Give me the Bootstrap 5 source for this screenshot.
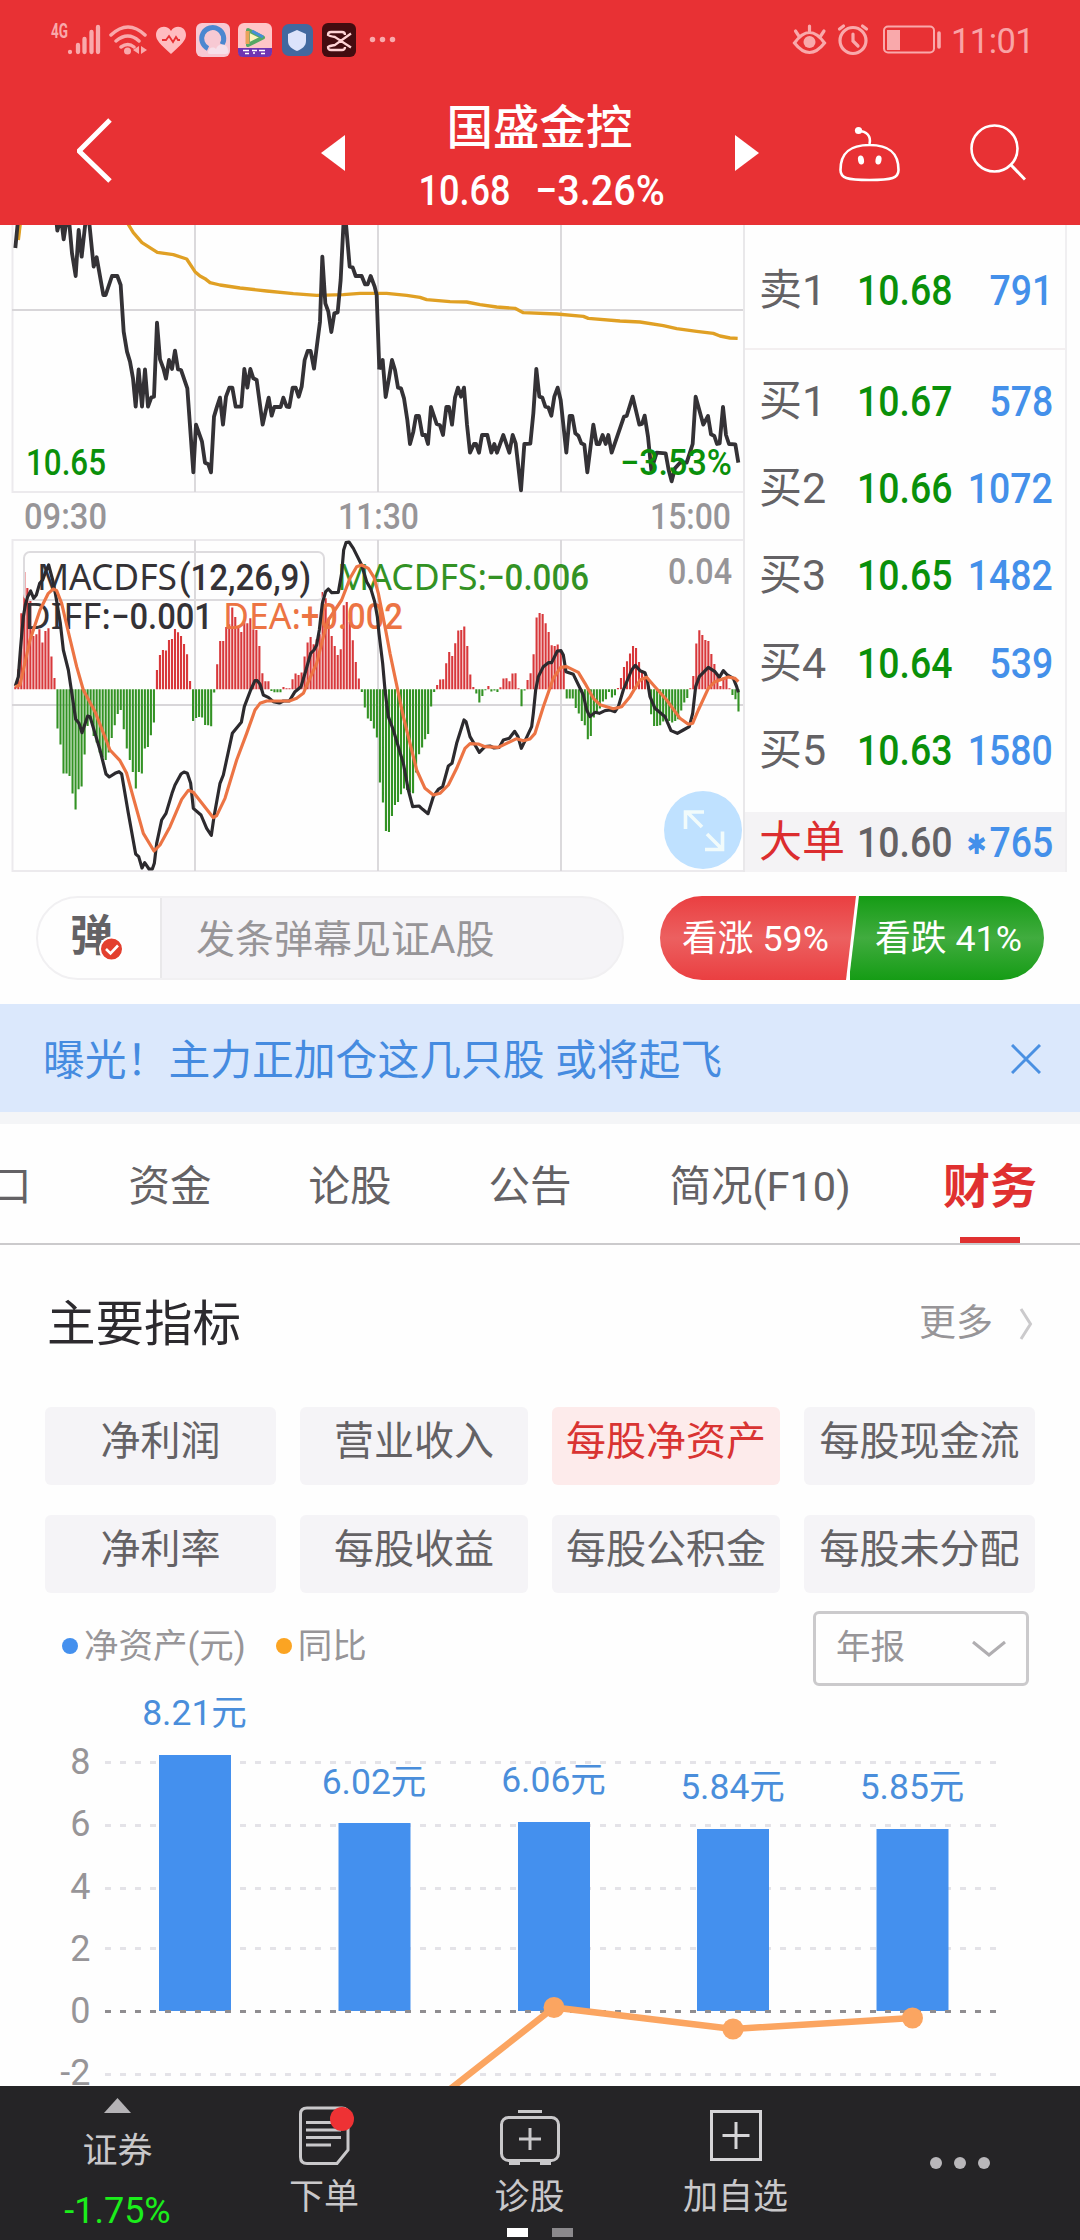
<!DOCTYPE html>
<html lang="zh-CN">
<head>
<meta charset="utf-8">
<meta name="viewport" content="width=device-width, initial-scale=1">
<title>国盛金控</title>
<link href="https://cdn.jsdelivr.net/npm/bootstrap@5.3.0/dist/css/bootstrap.min.css" rel="stylesheet">
<style>
  body{width:1080px;height:2240px;overflow:hidden;background:#fefefe;color:#646265;font-family:Roboto,"Noto Sans CJK SC",sans-serif;line-height:1}
  svg{display:block;flex:none}
  .app{width:1080px;height:2240px}
  .top{background:#e83134;height:225px;color:#fff}
  .statusbar{height:80px;padding-left:50px;padding-right:46px}
  .clock{font-size:34.5px;color:#f9a3a5;letter-spacing:-.6px;margin:2px 0 0 9px}
  .titlebar{height:145px;padding:0 54px 0 77px}
  .stock{width:390px;padding-top:23px}
  .stock h1{font-size:46.500px;line-height:50px;font-weight:500;margin:0}
  .quote{line-height:42px;margin-top:17px;font-size:42px}
  .din{display:inline-block;transform:scaleX(.87);font-weight:500}
  .quote .last{transform:translateX(-1px) scaleX(.86)}
  .quote .chg{transform:translateX(2px) scaleX(.94);margin-left:10px}
  .market{height:647px}
  .book{width:324px;border-left:2px solid #e9e8ea;border-right:2px solid #f0eff1;font-size:43px}
  .book .line{height:87.2px;padding-left:14px;padding-right:12px}
  .book .line .lab{width:98px;flex:none;white-space:nowrap;line-height:1}
  .book .line .px{color:#0a900a;width:92px;flex:none}
  .book .line .vol{color:#4490ea;flex:1;min-width:0;display:flex;justify-content:flex-end;white-space:nowrap}
  .px .din{transform-origin:left}
  .vol .din{transform-origin:right}
  .star{font-size:29px;font-weight:900;margin-right:3px;vertical-align:4px;-webkit-text-stroke:1px #4490ea}
  .sell{height:125px!important;border-bottom:2px solid #f3eff0;padding-top:8px}
  .buys{padding-top:8px;height:462px}
  .big{background:#f4f3f5;height:60px!important}
  .big .lab{color:#dc2d2f}.big .px{color:#646265!important}
  .danmu{height:132px;padding:24px 36px}
  .bullet{width:588px;height:84px;border:2px solid #f1f0f2;border-radius:42px;background:#f5f4f7;overflow:hidden;font-size:39px;color:#979598}
  .bullet .tag{width:124px;height:100%;background:#fefefe;border-right:2px solid #e9e8ea}
  .bullet .msg{padding:4px 0 0 34px}
  .votes{width:384px;height:84px;border-radius:42px;overflow:hidden;font-size:35.800px;color:#fff;background:#fff}
  .up{width:200px;padding:3px 0 0 22px;margin-right:-10px;background:linear-gradient(#ea3f41,#ec6060 50%,#ea3f41);clip-path:polygon(0 0,196px 0,186px 100%,0 100%)}
  .down{padding:3px 0 0 25px;flex:1;background:linear-gradient(#159c15,#41ac3f 50%,#159c15);clip-path:polygon(9px 0,100% 0,100% 100%,-1px 100%)}
  .notice{height:108px;background:#dbe8fc;color:#458be0;font-size:41.800px;padding:2px 39px 0 43px}
  .notice span{padding-top:3px}
  .strip{height:12px;background:#f4f5f7}
  .tabs{height:121px;border-bottom:2px solid #cbcacc;font-size:41.500px}
  .tabs .tb{position:relative;height:100%;flex:none;display:flex;align-items:center;justify-content:center;white-space:nowrap;padding-top:6px}
  .tabs .on{color:#e03030;font-weight:700;font-size:47px}
  .tabs .on::after{content:"";position:absolute;width:60px;height:6px;bottom:0;left:50%;margin-left:-30px;background:#e03030}
  .head{height:162px;padding:0 46px 5px 47px;font-size:48.500px;color:#2c2a2e}
  .head .ttl{padding-top:3px}
  .more{font-size:37px;color:#979598}
  .chips{display:grid;grid-template-columns:231px 228px 228px 231px;column-gap:24px;row-gap:30px;padding-left:45px;font-size:40px}
  .chip{height:78px;border-radius:6px;background:#f5f4f7;padding-bottom:9px;white-space:nowrap;overflow:hidden}
  .chip.on{background:#fdebeb;color:#d93433}
  .legendrow{height:76px;margin-top:17px;margin-bottom:1px;padding:0 51px 0 62px;color:#979598;font-size:34.500px}
  .dot{width:16px;height:16px;border-radius:50%;display:inline-block}
  .key{margin-left:6px}
  .period{width:216px;height:75px;border:3px solid #cbcacc;border-radius:6px;padding:0 19px 2px 20px}
  .foot{height:154px;background:#252426;color:#c9c8ca;font-size:35px}
  .foot .it{height:100%}
  .pager{position:absolute;left:507px;top:2228px;gap:24px}
  .pager i{width:21px;height:9px;background:#fff}
  .pager i+i{background:#8b898c}
</style>
</head>
<body>
<div class="app d-flex flex-column">
  <header class="top">
    <div class="statusbar d-flex align-items-center justify-content-between">
      <svg width="350" height="40" viewBox="50 21 350 40" fill="none" stroke="#f9a9ab">
        <text x="51" y="39" font-size="20" font-weight="700" fill="#f9a9ab" stroke="none" textLength="17" lengthAdjust="spacingAndGlyphs">4G</text>
        <path d="M70 53v0M78 53v-7M84.500 53v-13M91.500 53v-20M98 53v-25" stroke-width="4.300" stroke-linecap="round"/>
        <path d="M111 36q17-16 34 0M116 42q12-10 23 0M121 48q7-5 13 0" stroke-width="3.500" stroke-linecap="round"/>
        <circle cx="127.500" cy="52" r="3.500" fill="#f9a9ab" stroke="none"/>
        <path d="M139 47v8l-6-4zM141 47v8l6-4z" fill="#f9a9ab" stroke="none"/>
        <path d="M171 55C160 45 156 41 156 36c0-9 11-11 15-4 4-7 15-5 15 4 0 5-4 9-15 19z" fill="#ffbcc0" stroke="none"/>
        <path d="M162 41h4l3-4 4 6 3-5 2 3h2" stroke="#e83134" stroke-width="1.800"/>
        <rect x="196" y="24" width="34" height="34" rx="6" fill="#f7c9d3" stroke="none"/>
        <path d="M208 49.500a11 11 0 1 1 14-4" stroke="#4b87d0" stroke-width="5"/>
        <path d="M208 54c0-5 5-7 8-4 2-6 11-6 12 1 2 4-2 4-4 4h-12q-4 0-4-1z" fill="#f6e0ea" stroke="none"/>
        <rect x="238" y="24" width="34" height="34" rx="6" fill="#ffc6c8" stroke="none"/>
        <path d="M248 31l15 7.500-15 7.500z" stroke="#57a864" stroke-width="4" stroke-linejoin="round" fill="#fff3bb"/>
        <path d="M247.500 45V32" stroke="#e9a35a" stroke-width="4"/><path d="M252 32l11 6" stroke="#478dd8" stroke-width="3"/>
        <path d="M238 49h34v4q0 5-5 5h-24q-5 0-5-5z" fill="#6e35b2" stroke="none"/>
        <path d="M243 51.500h6m-4 3h4m3-3h5m-3 1.500v2m5-3.500h6m-4 3h4" stroke="#fff" stroke-width="1.500"/>
        <rect x="282" y="25" width="31" height="32" rx="7" fill="#42699f" stroke="none"/>
        <path d="M297 31l9 4v7c0 5-4 8-9 10-5-2-9-5-9-10v-7z" fill="#dce3fb" stroke="none"/>
        <rect x="322" y="24" width="34" height="34" rx="6" fill="#430c10" stroke="none"/>
        <path d="M351 34.500L335 46q-6 1-7 2 0 3 3 3h11q3 0 3-3M351 48.500L335 38q-6-1-7-2 0-3 3-3h11q3 0 3 3" stroke="#ffd3d5" stroke-width="2.300"/>
        <path d="M372.500 40.500v0M382.500 40.500v0M392.500 40.500v0" stroke-width="5.500" stroke-linecap="round"/>
      </svg>
      <div class="d-flex align-items-center">
        <svg width="150" height="40" viewBox="792 21 150 40" fill="none" stroke="#f9a9ab" stroke-width="3.200" stroke-linecap="round">
          <path d="M794.500 44q15-21 30 0-15 19-30 0zM795.500 32l4 6M809.500 27v5M824 32l-4 6"/><circle cx="809.500" cy="43" r="6" fill="#f9a9ab" stroke="none"/>
          <circle cx="853" cy="41.500" r="13"/><path d="M853 35v7l5 5M839.500 30l4-3M866.500 30l-4-3"/>
          <rect x="884" y="27.500" width="50" height="26" rx="4" stroke-width="2"/><rect x="887" y="31" width="13" height="20" fill="#f9a9ab" stroke="none"/><path d="M939 34v14" stroke-width="3.600"/>
        </svg>
        <span class="clock">11:01</span>
      </div>
    </div>
    <div class="titlebar d-flex align-items-start justify-content-between">
      <svg width="36" height="145" viewBox="77 80 36 145"><path d="M110 120L79 151l31 30" fill="none" stroke="#fff" stroke-width="5"/></svg>
      <div class="d-flex align-items-start" style="margin-left:152px">
        <svg width="24" height="145" viewBox="321 80 24 145"><path d="M345 135v36l-24-18z" fill="#fff"/></svg>
        <div class="stock text-center">
          <h1>国盛金控</h1>
          <div class="quote d-flex justify-content-center"><span class="din last">10.68</span><span class="din chg">−3.26%</span></div>
        </div>
        <svg width="24" height="145" viewBox="735 80 24 145"><path d="M735 135v36l24-18z" fill="#fff"/></svg>
      </div>
      <div class="d-flex" style="margin-left:25px;gap:69px">
        <svg width="62" height="145" viewBox="839 80 62 145" fill="none" stroke="#fff" stroke-width="2.600"><path d="M869.500 145c20 0 29 8 29 25 0 8-6 10-29 10s-29-2-29-10c0-17 9-25 29-25zM869.500 144c2-8-3-13-11-13"/><circle cx="858.500" cy="130.500" r="3.600" fill="#fff" stroke="none"/><ellipse cx="861" cy="160" rx="3" ry="4.500" fill="#fff" stroke="none" transform="rotate(-10 861 160)"/><ellipse cx="878.500" cy="160" rx="3" ry="4.500" fill="#fff" stroke="none" transform="rotate(10 878.500 160)"/></svg>
        <svg width="56" height="145" viewBox="970 80 56 145" fill="none" stroke="#fff" stroke-width="2.600"><circle cx="994.500" cy="148.500" r="23"/><path d="M1010.500 164.500l14.500 15" stroke-width="3"/></svg>
      </div>
    </div>
  </header>

  <section class="market d-flex">
    <svg id="kchart" width="743" height="647" viewBox="0 225 743 647" fill="none">
      <g stroke="#eceaed" stroke-width="2"><path d="M12.500 225V492H743M12.500 872V540H743M12 871H743"/></g>
      <path d="M12 310H743M12 705H743M195 225V492M378 225V492M561 225V492M195 540V871M378 540V871M561 540V871" stroke="#d8d6d9" stroke-width="1.800"/>
      <g stroke-width="10" stroke-linejoin="round" stroke="#e0a024">
        <polyline transform="translate(0 220) scale(.33333)" points="55,60 61,10"/>
        <polyline transform="translate(0 220) scale(.33333)" points="380,5 400,38 426,68 472,97 520,104 560,117 585,155 600,168 615,176 630,188 660,195 720,204 800,213 880,221 950,226 1030,224 1080,220 1160,220 1220,226 1260,232 1280,239 1350,245 1400,246 1440,254 1490,261 1545,265 1570,278 1670,282 1750,289 1765,295 1860,303 1920,306 1990,317 2030,326 2090,334 2140,340 2160,348 2190,354 2213,355"/>
      </g>
      <g stroke-width="11.500" stroke-linejoin="round" stroke="#343236">
        <polyline transform="translate(0 220) scale(.33333)" points="46,84 56,-20 160,-20 168,-10 172,32 178,10 185,10 191,58 200,0 208,10 216,100 227,168 236,30 245,110 256,10 268,10 281,140 290,112 310,225 317,225 336,168 352,168 362,195 371,335 381,395 390,425 399,475 407,560 416,448 426,560 435,448 444,560 454,532 462,530 471,308 480,418 490,445 498,476 507,420 516,447 525,392 534,448 543,450 562,505 580,757 588,614 606,665 615,728 625,733 633,757 642,590 651,560 660,533 669,614 678,530 688,503 697,503 707,560 724,560 733,447 742,503 751,447 760,475 770,480 788,614 806,533 815,587 823,561 842,561 850,533 860,560 868,561 878,503 887,503 896,530 905,500 914,420 923,393 932,393 942,446 951,375 960,305 967,110 976,250 985,275 994,336 1003,280 1013,277 1022,180 1031,0 1037,0 1049,140 1058,142 1067,168 1085,168 1095,193 1103,193 1112,168 1124,200 1130,225 1138,448"/>
        <polyline transform="translate(370 220) scale(.33333)" points="28,448 38,420 47,531 57,475 66,420 75,450 84,503 93,505 102,535 112,600 120,672 130,635 138,588 147,588 157,645 166,645 174,672 183,561 200,612 210,616 219,645 229,561 237,561 246,614 255,533 264,503 273,530 282,503 291,614 300,698 312,672 318,672 327,698 336,645 352,645 364,698 373,672 381,698 400,645 418,698 428,645 437,670 453,811 463,672 481,671 490,580 499,447 508,530 517,533 526,560 535,562 544,587 553,530 563,503 572,540 589,698 599,588 607,588 616,640 625,647 634,670 643,674 652,757 670,614 680,672 688,672 698,645 707,672 715,645 725,698 762,590 770,588 788,530 808,614 816,612 824,587 834,650 844,750 860,698 887,700 896,750 905,784 915,745 930,728 950,728 968,672 977,530 1000,614 1014,588 1023,643 1033,648 1041,672 1049,670 1059,561 1068,645 1077,672 1096,673 1105,728"/>
      </g>
      <g id="macdbars"></g>
      <g font-size="36" font-weight="500" fill="#0a900a">
        <text x="26" y="474.500" textLength="80" lengthAdjust="spacingAndGlyphs">10.65</text>
        <text x="620" y="474.500" textLength="112" lengthAdjust="spacingAndGlyphs">−3.53%</text>
      </g>
      <g font-size="36" font-weight="500" fill="#979598">
        <text x="24" y="529" textLength="83" lengthAdjust="spacingAndGlyphs">09:30</text>
        <text x="338" y="529" textLength="81" lengthAdjust="spacingAndGlyphs">11:30</text>
        <text x="650" y="529" textLength="81" lengthAdjust="spacingAndGlyphs">15:00</text>
        <text x="668" y="583.500" textLength="64" lengthAdjust="spacingAndGlyphs">0.04</text>
      </g>
      <rect x="24" y="552" width="300" height="48" rx="6" stroke="#dddbde" stroke-width="2"/>
      <g font-size="36">
        <g fill="#343236"><text x="37" y="590" font-family="Noto Sans" textLength="140" lengthAdjust="spacingAndGlyphs">MACDFS</text><text x="179" y="590" font-weight="500" textLength="132" lengthAdjust="spacingAndGlyphs">(12,26,9)</text>
        <text x="24" y="629" font-family="Noto Sans" textLength="87" lengthAdjust="spacingAndGlyphs">DIFF:</text><text x="111" y="629" font-weight="500" textLength="102" lengthAdjust="spacingAndGlyphs">−0.001</text></g>
        <g fill="#339224"><text x="337" y="589.500" font-family="Noto Sans" textLength="150" lengthAdjust="spacingAndGlyphs">MACDFS:</text><text x="486" y="589.500" font-weight="500" textLength="103" lengthAdjust="spacingAndGlyphs">−0.006</text></g>
        <g fill="#ec7444"><text x="223" y="629" font-family="Noto Sans" textLength="78" lengthAdjust="spacingAndGlyphs">DEA:</text><text x="301" y="629" font-weight="500" textLength="102" lengthAdjust="spacingAndGlyphs">+0.002</text></g>
      </g>
      <g transform="translate(0 530) scale(.33333)" stroke-width="9.500" stroke-linejoin="round">
        <polyline stroke="#2c2a2e" points="46,468 55,440 62,350 70,260 76,225 83,200 92,183 101,205 109,195 119,160 128,150 137,125 146,105 158,150 166,190 172,225 181,280 190,360 205,420 217,500 227,568 237,580 246,608 263,558 270,560 285,610 300,660 318,732 328,741 345,730 357,725 365,732 385,850 407,972 416,980 426,1014 434,998 447,1017 457,1017 463,1000 470,940 485,870 498,850 516,790 525,765 543,732 552,726 562,730 572,760 580,835 603,855 620,895 634,916 642,860 660,760 670,735 697,610 724,577 733,530 752,480 765,452 772,452 780,462 790,495 805,502 820,515 838,519 850,513 868,513 885,485 903,470 918,420 932,370 942,360 950,345 958,300 967,220 977,185 985,177 995,188 1015,187 1025,130 1031,60 1038,38 1047,36 1060,55 1085,105 1100,155 1113,178 1124,215 1132,260 1137,310 1148,400 1155,480 1165,560 1180,600 1210,700 1225,780 1238,830 1257,828 1268,838 1284,851 1300,800 1315,778 1328,770 1345,708 1356,700 1370,640 1392,570 1398,575 1410,620 1425,645 1438,667 1455,650 1470,648 1482,654 1498,652 1510,630 1528,625 1544,604 1554,620 1564,655 1580,622 1595,590 1600,550 1607,480 1615,440 1630,410 1645,398 1655,398 1672,363 1683,362 1690,375 1698,425 1720,433 1750,495 1760,540 1770,560 1785,547 1798,550 1815,542 1830,540 1845,545 1855,530 1870,480 1895,420 1906,406 1920,422 1935,428 1942,450 1950,500 1965,535 1995,560 2013,602 2032,610 2050,600 2068,590 2078,550 2087,470 2098,440 2125,412 2145,425 2158,442 2170,422 2182,435 2200,445 2210,470 2215,487"/>
        <polyline stroke="#ec7444" points="46,470 60,465 70,420 90,330 120,240 145,190 160,177 170,182 185,220 200,285 230,410 250,480 285,545 330,660 360,692 380,730 395,785 430,910 462,963 480,945 510,890 545,808 565,781 580,787 610,825 640,863 650,857 675,805 710,690 740,610 765,540 780,520 800,513 868,513 890,505 910,490 925,455 950,400 970,320 985,270 1025,210 1050,145 1070,110 1085,105 1105,115 1122,142 1135,190 1155,290 1170,370 1210,560 1250,720 1275,775 1300,795 1320,790 1345,765 1370,715 1395,655 1410,641 1435,642 1455,650 1495,652 1550,626 1570,632 1590,627 1605,610 1630,530 1660,445 1682,412 1700,410 1735,427 1755,460 1780,505 1800,524 1840,536 1865,530 1890,500 1920,450 1940,442 1960,465 2000,510 2040,565 2065,583 2078,580 2095,540 2125,475 2145,455 2185,441 2205,445 2215,455"/>
      </g>
      <circle cx="703" cy="830" r="39" fill="#bfe1ff"/>
      <path d="M702 827l-15-15M704 812h-18.500v17M707 834l15 15M705 849.500h17.500v-18" stroke="#f1fbfb" stroke-width="3.600"/>
    </svg>
    <div class="book d-flex flex-column">
      <div class="line sell d-flex align-items-center"><span class="lab">卖1</span><span class="px"><span class="din">10.68</span></span><span class="vol"><span class="din">791</span></span></div>
      <div class="buys">
        <div class="line d-flex align-items-center"><span class="lab">买1</span><span class="px"><span class="din">10.67</span></span><span class="vol"><span class="din">578</span></span></div>
        <div class="line d-flex align-items-center"><span class="lab">买2</span><span class="px"><span class="din">10.66</span></span><span class="vol"><span class="din">1072</span></span></div>
        <div class="line d-flex align-items-center"><span class="lab">买3</span><span class="px"><span class="din">10.65</span></span><span class="vol"><span class="din">1482</span></span></div>
        <div class="line d-flex align-items-center"><span class="lab">买4</span><span class="px"><span class="din">10.64</span></span><span class="vol"><span class="din">539</span></span></div>
        <div class="line d-flex align-items-center"><span class="lab">买5</span><span class="px"><span class="din">10.63</span></span><span class="vol"><span class="din">1580</span></span></div>
      </div>
      <div class="line big d-flex align-items-center"><span class="lab">大单</span><span class="px"><span class="din">10.60</span></span><span class="vol"><span class="din"><span class="star">∗</span>765</span></span></div>
    </div>
  </section>

  <section class="danmu d-flex justify-content-between">
    <div class="bullet d-flex align-items-center">
      <div class="tag">
        <svg width="122" height="80" viewBox="38 898 122 80"><text x="70" y="951" font-size="43" font-weight="700" fill="#646265" font-family="Noto Sans CJK SC">弹</text><circle cx="111.500" cy="949" r="11.500" fill="#e3402f" stroke="#fff" stroke-width="2"/><path d="M106 949l4.500 4.500 7.500-8" fill="none" stroke="#fff" stroke-width="2.600"/></svg>
      </div>
      <div class="msg">发条弹幕见证A股</div>
    </div>
    <div class="votes d-flex"><div class="up d-flex align-items-center">看涨 59%</div><div class="down d-flex align-items-center">看跌 41%</div></div>
  </section>

  <section class="notice d-flex align-items-center justify-content-between">
    <span>曝光！主力正加仓这几只股 或将起飞</span>
    <svg width="30" height="30" viewBox="0 0 30 30"><path d="M1 1l28 28M29 1L1 29" stroke="#4a90e2" stroke-width="3"/></svg>
  </section>
  <div class="strip"></div>

  <nav class="tabs d-flex">
    <div class="tb justify-content-start" style="width:90px;margin-left:-10px">口</div>
    <div class="tb" style="width:180px">资金</div>
    <div class="tb" style="width:180px">论股</div>
    <div class="tb" style="width:180px">公告</div>
    <div class="tb" style="width:280px">简况(F10)</div>
    <div class="tb on" style="width:180px">财务</div>
  </nav>

  <div class="head d-flex align-items-center justify-content-between">
    <span class="ttl">主要指标</span>
    <span class="more d-flex align-items-center">更多<svg width="16" height="36" viewBox="0 0 16 36" style="margin-left:25px"><path d="M3 3l9.500 15L3 33" fill="none" stroke="#cbcacc" stroke-width="3"/></svg></span>
  </div>

  <div class="chips">
    <div class="chip d-flex align-items-center justify-content-center">净利润</div>
    <div class="chip d-flex align-items-center justify-content-center">营业收入</div>
    <div class="chip on d-flex align-items-center justify-content-center">每股净资产</div>
    <div class="chip d-flex align-items-center justify-content-center">每股现金流</div>
    <div class="chip d-flex align-items-center justify-content-center">净利率</div>
    <div class="chip d-flex align-items-center justify-content-center">每股收益</div>
    <div class="chip d-flex align-items-center justify-content-center">每股公积金</div>
    <div class="chip d-flex align-items-center justify-content-center">每股未分配</div>
  </div>

  <div class="legendrow d-flex align-items-center justify-content-between">
    <div class="d-flex align-items-center pb-1"><span class="dot" style="background:#4490ee"></span><span class="key">净资产(元)</span><span class="dot" style="background:#fba422;margin-left:30px"></span><span class="key">同比</span></div>
    <div class="period d-flex align-items-center justify-content-between"><span>年报</span><svg width="36" height="20" viewBox="0 0 36 20"><path d="M2 5l16 13L34 5" fill="none" stroke="#b0aeb1" stroke-width="3"/></svg></div>
  </div>

  <div style="height:399px" class="overflow-hidden">
    <svg width="1080" height="399" viewBox="0 1687 1080 399">
      <g stroke="#e4e3e8" stroke-width="3" stroke-dasharray="6 9"><path d="M105 1762.500H998M105 1825.500H998M105 1888.500H998M105 1948.500H998M105 2074.500H998"/></g>
      <g fill="#4490ee"><rect x="159" y="1755" width="72" height="256"/><rect x="338.500" y="1823" width="72" height="188"/><rect x="518" y="1822" width="72" height="189"/><rect x="697" y="1829" width="72" height="182"/><rect x="876.500" y="1829" width="72" height="182"/></g>
      <path d="M105 2011.500H998" stroke="#8f8d90" stroke-width="3" stroke-dasharray="6 9"/>
      <path d="M449 2090L554 2007.500L733 2029L912.500 2018" fill="none" stroke="#fba561" stroke-width="6.500"/>
      <g fill="#fba561"><circle cx="554" cy="2007.500" r="10.500"/><circle cx="733" cy="2029" r="10.500"/><circle cx="912.500" cy="2018" r="10.500"/></g>
      <g font-size="36" fill="#979598" text-anchor="end"><text x="90.500" y="1773.500">8</text><text x="90.500" y="1836">6</text><text x="90.500" y="1898.500">4</text><text x="90.500" y="1961">2</text><text x="90.500" y="2022.500">0</text><text x="90.500" y="2085">-2</text></g>
      <g font-size="35.500" fill="#4a8edb" text-anchor="middle"><text x="194.500" y="1725">8.21元</text><text x="374" y="1793.500">6.02元</text><text x="553.500" y="1792">6.06元</text><text x="732.500" y="1799">5.84元</text><text x="912" y="1799">5.85元</text></g>
    </svg>
  </div>

  <footer class="foot d-flex">
    <div class="it d-flex flex-column align-items-center" style="width:235px;padding-top:12px">
      <svg width="27" height="15" viewBox="0 0 27 15"><path d="M13.500 0L27 15H0z" fill="#b5b3b6"/></svg>
      <span style="margin-top:21px">证券</span><span style="margin-top:24px;font-size:36px;color:#1bee1b">-1.75%</span>
    </div>
    <div class="it d-flex flex-column align-items-center" style="width:178px;padding-top:18px">
      <svg width="66" height="62" viewBox="291 2104 66 62" fill="none" stroke="#c9c8ca" stroke-width="3"><path d="M307 2108h35q6 0 6 6v36l-11 13.500h-30q-6.500 0-6.500-6.500v-43q0-6 6.500-6zM306 2122.500h26M306 2130h35M306 2137.500h35M306 2145h25"/><circle cx="342" cy="2119" r="12" fill="#ee3234" stroke="none"/></svg>
      <span style="margin-top:14px">下单</span>
    </div>
    <div class="it d-flex flex-column align-items-center" style="width:233px;padding-top:18px">
      <svg width="62" height="62" viewBox="499 2104 62 62" fill="none" stroke="#c9c8ca" stroke-width="3"><rect x="501.500" y="2117.500" width="57" height="43" rx="7"/><path d="M518 2111.500h24M530 2128v22M519 2139h22"/><path d="M509 2163h11M540 2163h11" stroke-width="4"/></svg>
      <span style="margin-top:14px">诊股</span>
    </div>
    <div class="it d-flex flex-column align-items-center" style="width:179px;padding-top:18px">
      <svg width="54" height="62" viewBox="708.500 2104 54 62" fill="none" stroke="#d6d5d7" stroke-width="3"><rect x="711" y="2111.500" width="49" height="48"/><path d="M735.500 2122v27M722 2135.500h27"/></svg>
      <span style="margin-top:14px">加自选</span>
    </div>
    <div class="it d-flex align-items-center flex-fill" style="padding-left:104px">
      <svg width="62" height="14" viewBox="0 0 62 14" fill="#b9b7ba"><circle cx="7" cy="7" r="6"/><circle cx="31" cy="7" r="6"/><circle cx="55" cy="7" r="6"/></svg>
    </div>
  </footer>
</div>
<div class="pager d-flex"><i></i><i></i></div>
<script src="https://cdn.jsdelivr.net/npm/bootstrap@5.3.0/dist/js/bootstrap.bundle.min.js"></script>
<script>
  // MACD histogram: one value per minute, positive bars rise from the zero line
  const macd = [8,60,228,352,304,270,160,165,180,140,175,183,98,34,
    -118,-166,-253,-253,-260,-313,-361,-300,-292,-196,-110,-90,-140,-160,-190,-205,-212,-190,-146,-108,-74,-62,-120,-178,-212,-248,-298,-248,-253,-178,-173,-138,-100,
    58,103,118,116,148,151,181,171,160,136,105,25,-95,-86,-83,-85,-107,-108,-111,-10,
    75,145,145,187,195,245,217,190,172,200,198,213,180,178,130,48,24,24,-5,-9,-9,-9,
    7,3,3,30,47,43,50,98,140,157,135,150,165,292,273,215,160,130,103,120,252,262,202,147,82,32,
    -8,-55,-88,-95,-118,-145,-280,-340,-425,-428,-380,-347,-338,-315,-298,-302,-310,-312,-250,-195,-175,-150,-134,-52,-8,
    13,29,30,78,112,100,138,176,178,188,130,44,7,-13,-40,-20,-3,10,-7,-4,-8,6,32,33,24,47,48,3,-51,-4,
    28,48,105,215,229,226,198,172,132,130,134,115,70,-28,-28,-28,-56,-73,-95,-108,-150,-140,-85,-70,-58,-37,-30,-8,-25,-18,
    4,34,67,84,107,130,124,82,55,35,10,-75,-110,-110,-108,-97,-85,-95,-100,-95,-90,-64,-40,-26,
    3,40,137,177,163,148,145,106,76,40,10,35,33,3,-17,-30,-67];
  const zero = 689.3, bars = {up:'', down:''};
  macd.forEach((v, i) => {
    const x = (15.3 + i * 3.0133).toFixed(2);
    bars[v > 0 ? 'up' : 'down'] += `M${x} ${zero}V${(zero - v / 3).toFixed(1)}`;
  });
  document.getElementById('macdbars').innerHTML =
    `<path d="${bars.up}" stroke="#d8383b" stroke-width="2.1"/><path d="${bars.down}" stroke="#339224" stroke-width="2.1"/>`;
</script>
</body>
</html>
